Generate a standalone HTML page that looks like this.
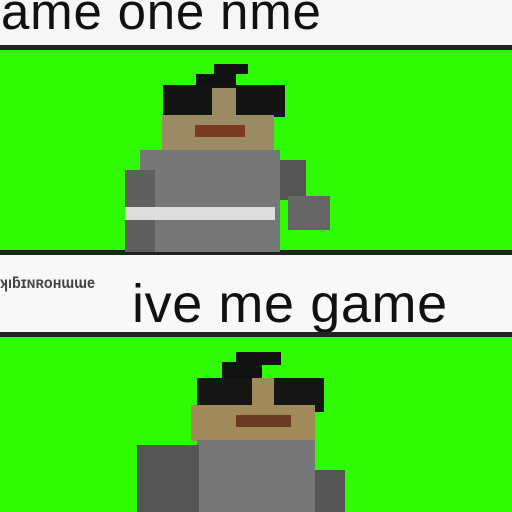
<!DOCTYPE html>
<html><head><style>
body{margin:0;width:512px;height:512px;overflow:hidden;background:#fff;position:relative;font-family:"Liberation Sans",sans-serif}
div{position:absolute}
.t{color:#111;white-space:nowrap}
</style></head><body>
<div style="left:0;top:0;width:512px;height:45px;background:#f6f6f6"></div>
<div class="t" style="left:1px;top:-18px;font-size:51px;letter-spacing:0.8px">ame one nme</div>
<div style="left:0;top:45px;width:512px;height:5px;background:#222"></div>
<div style="left:0;top:50px;width:512px;height:200px;background:#2efb04"></div>
<div style="left:0;top:250px;width:512px;height:5px;background:#222"></div>
<div style="left:0;top:255px;width:512px;height:77px;background:#f8f8f8"></div>
<div class="t" style="left:0;top:275px;font-size:16px;font-weight:bold;color:#444;transform:scaleX(0.9);transform-origin:left">ʞıƃɪɴʀoнɯɯe</div>
<div class="t" style="left:132px;top:273px;font-size:54px;letter-spacing:0.6px">ive me game</div>
<div style="left:0;top:332px;width:512px;height:5px;background:#222"></div>
<div style="left:0;top:337px;width:512px;height:175px;background:#2efb04"></div>
<!-- robot 1 -->
<div style="left:214px;top:64px;width:34px;height:10px;background:#111"></div>
<div style="left:196px;top:74px;width:40px;height:14px;background:#111"></div>
<div style="left:163px;top:85px;width:122px;height:32px;background:#141414"></div>
<div style="left:162px;top:115px;width:112px;height:36px;background:#9a8a66"></div>
<div style="left:212px;top:88px;width:24px;height:40px;background:#9a8a66"></div>
<div style="left:195px;top:125px;width:50px;height:12px;background:#7a3a22"></div>
<div style="left:140px;top:150px;width:140px;height:102px;background:#777"></div>
<div style="left:125px;top:170px;width:30px;height:82px;background:#5f5f5f"></div>
<div style="left:280px;top:160px;width:26px;height:40px;background:#555"></div>
<div style="left:288px;top:196px;width:42px;height:34px;background:#666"></div>
<div style="left:125px;top:207px;width:150px;height:13px;background:#ddd"></div>
<!-- robot 2 -->
<div style="left:236px;top:352px;width:45px;height:13px;background:#111"></div>
<div style="left:222px;top:362px;width:40px;height:18px;background:#111"></div>
<div style="left:197px;top:378px;width:127px;height:34px;background:#151515"></div>
<div style="left:191px;top:405px;width:124px;height:36px;background:#a08a5a"></div>
<div style="left:252px;top:378px;width:22px;height:40px;background:#a08a5a"></div>
<div style="left:236px;top:415px;width:55px;height:12px;background:#6a3a22"></div>
<div style="left:197px;top:440px;width:118px;height:72px;background:#777"></div>
<div style="left:137px;top:445px;width:62px;height:67px;background:#555"></div>
<div style="left:315px;top:470px;width:30px;height:42px;background:#555"></div>
</body></html>
